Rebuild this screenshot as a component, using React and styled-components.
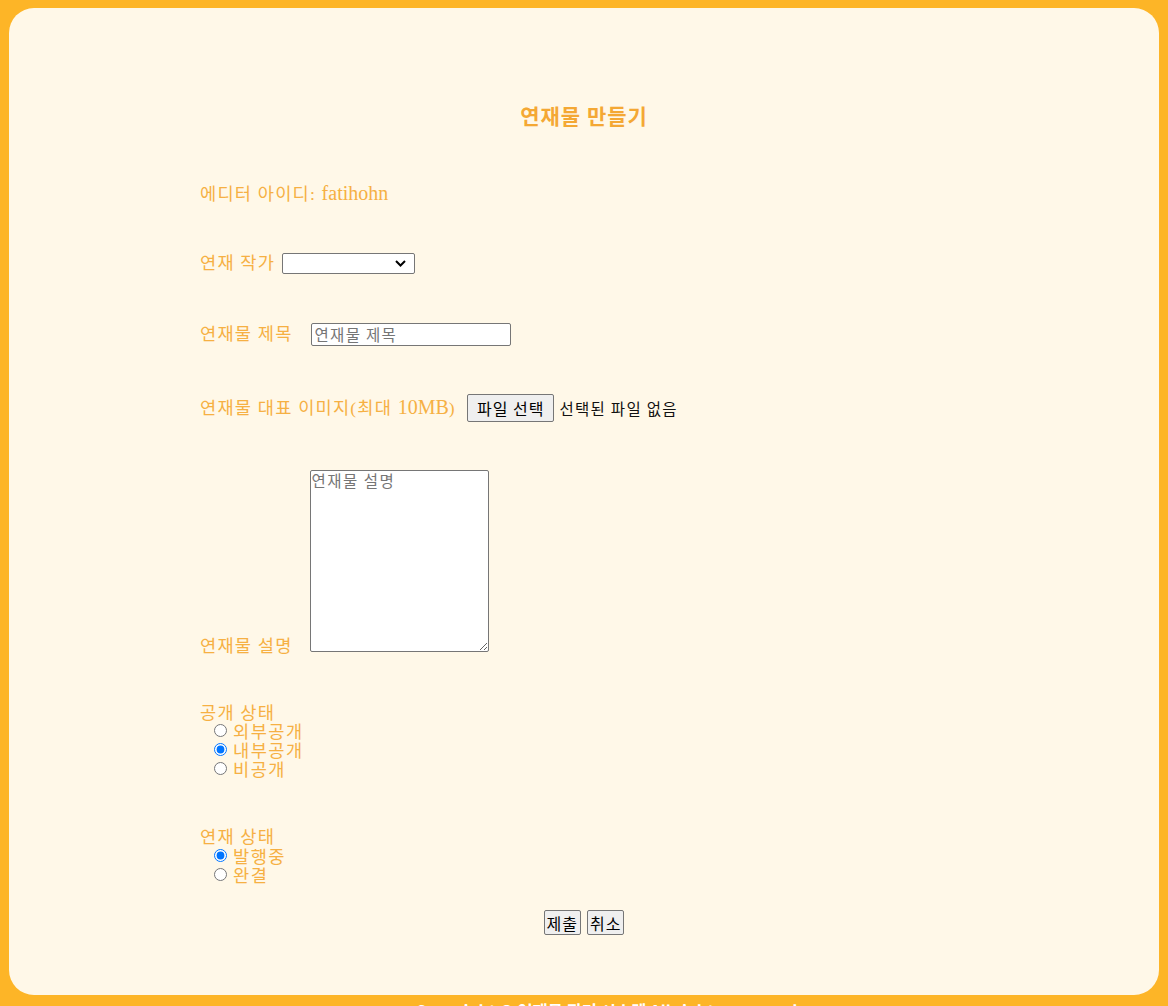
import React from 'react';
import styled, {createGlobalStyle} from 'styled-components';

const GlobalStyle = createGlobalStyle`
  body {
    margin: 0;
    background: #FDB527;
    font-family: "Liberation Serif", "Noto Sans CJK KR", serif;
  }
`;

const Page = styled.div`
  padding: 8px 9px 0 9px;
`;

const Panel = styled.div`
  box-sizing: border-box;
  height: 987px;
  background: #FFF8E8;
  border-radius: 25px;
  padding-top: 92px;
`;

const Title = styled.h3`
  margin: 0;
  height: 30px;
  line-height: 30px;
  text-align: center;
  font-family: "Noto Sans CJK KR", sans-serif;
  font-size: 21px;
  letter-spacing: 1px;
  font-weight: 700;
  color: #F4A834;
`;

const Form = styled.form`
  margin-left: 191px;
  display: flex;
  flex-direction: column;
`;

const Row = styled.div`
  display: flex;
  align-items: ${p => (p.$bottom ? 'flex-end' : 'center')};
  height: ${p => (p.$h ? p.$h : '30px')};
  margin-top: ${p => p.$top}px;
`;

const Label = styled.label`
  font-size: 17.6px;
  line-height: 19px;
  letter-spacing: 1.2px;
  color: #F6B043;
  margin-right: ${p => p.$gap || 0}px;
  margin-bottom: ${p => p.$down || 0}px;
  white-space: nowrap;
`;

const Latin = styled.span`
  font-family: "Liberation Serif", serif;
  font-size: 20px;
  letter-spacing: 0;
`;

const SelectWrap = styled.div`
  position: relative;
  display: flex;
`;

const Select = styled.select`
  box-sizing: border-box;
  width: 133px;
  height: 21px;
  border: 1px solid #767676;
  border-radius: 2px;
  background: #fff;
  appearance: none;
`;

const Chevron = styled.svg`
  position: absolute;
  right: 9px;
  top: 7px;
  pointer-events: none;
`;

const TextInput = styled.input`
  box-sizing: border-box;
  width: 200px;
  height: 23px;
  border: 1px solid #767676;
  border-radius: 2px;
  padding: 1px 3px;
  font-family: "Noto Sans CJK KR", sans-serif;
  font-size: 15.5px;
  letter-spacing: 1.3px;
  background: #fff;
  &::placeholder { color: #757575; }
`;

const Button = styled.button`
  box-sizing: border-box;
  height: ${p => p.$h || 25}px;
  padding: 0 ${p => p.$pad || 2}px;
  border: 1px solid #767676;
  border-radius: 2px;
  background: #EFEFEF;
  color: #000;
  font-family: "Noto Sans CJK KR", sans-serif;
  font-size: 16px;
  letter-spacing: 1px;
  line-height: 1;
`;

const FileNote = styled.span`
  margin-left: 5px;
  font-family: "Noto Sans CJK KR", sans-serif;
  font-size: 15.5px;
  letter-spacing: 1.3px;
  color: #111;
`;

const TextArea = styled.textarea`
  box-sizing: border-box;
  width: 179px;
  height: 182px;
  border: 1px solid #767676;
  border-radius: 2px;
  padding: 1px;
  font-family: "Noto Sans CJK KR", monospace;
  font-size: 15.5px;
  letter-spacing: 1.5px;
  line-height: 1.1;
  background: #fff;
  &::placeholder { color: #757575; }
`;

const Group = styled.div`
  display: flex;
  flex-direction: column;
  margin-top: ${p => p.$top}px;
`;

const Option = styled.label`
  display: flex;
  align-items: center;
  height: 19px;
  font-size: 17.6px;
  letter-spacing: 1.5px;
  color: #F6B043;
  font-family: "Noto Sans CJK KR", sans-serif;
`;

const Radio = styled.input`
  width: 13px;
  height: 13px;
  margin: 0 6px 0 14px;
`;

const Actions = styled.div`
  display: flex;
  justify-content: center;
  gap: 6px;
  margin-top: 26px;
  margin-right: 191px;
`;

const Footer = styled.div`
  text-align: center;
  color: #fff;
  font-family: "Noto Sans CJK KR", sans-serif;
  font-weight: 700;
  font-size: 16.5px;
  padding-top: 4px;
  padding-left: 50px;
`;

export default function App() {
  return (
    <Page>
      <GlobalStyle />
      <Panel>
        <Title>연재물 만들기</Title>
        <Form onSubmit={e => e.preventDefault()}>
          <Row $top={49}>
            <Label>에디터 아이디: <Latin>fatihohn</Latin></Label>
          </Row>
          <Row $top={39}>
            <Label $gap={7}>연재 작가</Label>
            <SelectWrap>
              <Select defaultValue="">
                <option value=""></option>
              </Select>
              <Chevron width="11" height="7" viewBox="0 0 11 7">
                <path d="M1 1l4.5 4.5L10 1" fill="none" stroke="#000" strokeWidth="2" />
              </Chevron>
            </SelectWrap>
          </Row>
          <Row $top={41}>
            <Label $gap={18}>연재물 제목</Label>
            <TextInput placeholder="연재물 제목" />
          </Row>
          <Row $top={44}>
            <Label $gap={11}>연재물 대표 이미지(최대 <Latin>10MB</Latin>)</Label>
            <Button type="button" $h={28} $pad={9}>파일 선택</Button>
            <FileNote>선택된 파일 없음</FileNote>
          </Row>
          <Row $top={47} $h="182px" $bottom>
            <Label $gap={17} $down={-4}>연재물 설명</Label>
            <TextArea placeholder="연재물 설명" />
          </Row>
          <Group $top={52}>
            <Label $down={-2}>공개 상태</Label>
            <Option><Radio type="radio" name="open" />외부공개</Option>
            <Option><Radio type="radio" name="open" defaultChecked />내부공개</Option>
            <Option><Radio type="radio" name="open" />비공개</Option>
          </Group>
          <Group $top={50}>
            <Label $down={-1}>연재 상태</Label>
            <Option><Radio type="radio" name="state" defaultChecked />발행중</Option>
            <Option><Radio type="radio" name="state" />완결</Option>
          </Group>
          <Actions>
            <Button type="submit">제출</Button>
            <Button type="button">취소</Button>
          </Actions>
        </Form>
      </Panel>
      <Footer>Copyright © 연재물 관리 시스템 All rights reserved.</Footer>
    </Page>
  );
}
